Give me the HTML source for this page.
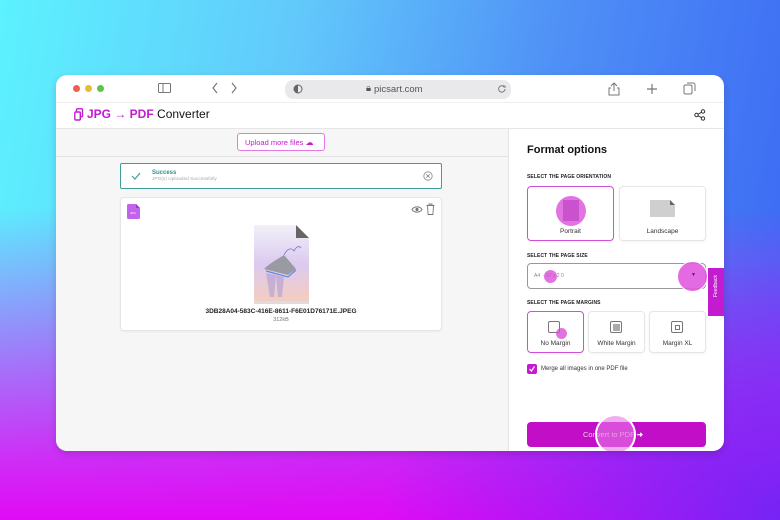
<!DOCTYPE html><html><head><meta charset="utf-8"><style>
*{margin:0;padding:0;box-sizing:border-box}
body{width:780px;height:520px;overflow:hidden;position:relative;font-family:"Liberation Sans",sans-serif;
background:
radial-gradient(ellipse 420px 260px at 800px 520px,rgba(100,40,245,.9),rgba(100,40,245,0)),
linear-gradient(to bottom,rgba(225,20,245,0) 40%,rgba(225,15,245,.85) 88%,rgba(225,10,245,1) 100%),
linear-gradient(100deg,#5cf2ff 0%,#62c8fb 35%,#4f90f6 65%,#3a66f4 100%);}
.a{position:absolute}
.win{left:56px;top:75px;width:668px;height:376px;background:#fff;border-radius:11px;overflow:hidden;box-shadow:0 3px 8px rgba(0,0,0,.15)}
.dot{width:7px;height:7px;border-radius:50%;top:10px}
.lbl{font-size:5px;font-weight:bold;color:#222;letter-spacing:.1px}
.card{border:1px solid #e6e6e6;border-radius:4px;background:#fff;box-shadow:0 1px 2px rgba(0,0,0,.05)}
.sel{border:1.5px solid #d04ed8}
.ct{font-size:6.5px;color:#333;text-align:center;width:100%}
.circ{border-radius:50%;background:rgba(215,70,215,.75)}
</style></head><body>
<div class="a win">
 <div class="a dot" style="left:17px;background:#ec5f57"></div>
 <div class="a dot" style="left:29px;background:#e6bc35"></div>
 <div class="a dot" style="left:41px;background:#5fc24a"></div>
 <svg class="a" style="left:102px;top:8px" width="14" height="11"><rect x=".5" y=".5" width="12" height="9" rx="1" fill="none" stroke="#777"/><line x1="5" y1="1" x2="5" y2="10" stroke="#777"/></svg>
 <svg class="a" style="left:155px;top:7px" width="30" height="12"><path d="M6 1 2 6 6 11M21 1 25 6 21 11" fill="none" stroke="#777" stroke-width="1.2"/></svg>
 <div class="a" style="left:229px;top:5px;width:226px;height:19px;background:#e9e9ec;border-radius:8px"></div>
 <svg class="a" style="left:237px;top:9px" width="10" height="10"><circle cx="5" cy="5" r="4" fill="none" stroke="#666"/><path d="M5 1a4 4 0 0 0 0 8z" fill="#666"/></svg>
 <div class="a" style="left:310px;top:8px;font-size:9.5px;color:#555">&#128274;&#xFE0E;</div>
 <div class="a" style="left:318px;top:9px;font-size:9.5px;color:#555">picsart.com</div>
 <svg class="a" style="left:441px;top:9px" width="10" height="10"><path d="M8 5a3.2 3.2 0 1 1-1-2.4M7 1v2h2" fill="none" stroke="#777"/></svg>
 <svg class="a" style="left:552px;top:7px" width="12" height="14"><path d="M6 9V1M3 4l3-3 3 3M3 6H1v7h10V6H9" fill="none" stroke="#777"/></svg>
 <svg class="a" style="left:590px;top:8px" width="12" height="12"><path d="M6 1v10M1 6h10" stroke="#777" stroke-width="1.2"/></svg>
 <svg class="a" style="left:627px;top:7px" width="13" height="13"><rect x="1" y="3" width="8" height="9" rx="1.5" fill="none" stroke="#777"/><path d="M4 1h6a2 2 0 0 1 2 2v6" fill="none" stroke="#777"/></svg>
 <div class="a" style="left:0;top:27px;width:668px;height:1px;background:#eee"></div>
 <svg class="a" style="left:18px;top:33px" width="10" height="13"><rect x="2.5" y=".8" width="6" height="8" rx="1" fill="none" stroke="#c21bd0" stroke-width="1.4"/><rect x=".8" y="4" width="5.5" height="8" rx="1" fill="#fff" stroke="#c21bd0" stroke-width="1.4"/></svg>
 <div class="a" style="left:31px;top:32px;font-size:12px;color:#111"><b style="color:#c21bd0;font-weight:600">JPG → PDF</b> Converter</div>
 <svg class="a" style="left:638px;top:34px" width="12" height="12"><circle cx="9" cy="2.5" r="1.7" fill="none" stroke="#333"/><circle cx="2.5" cy="6" r="1.7" fill="none" stroke="#333"/><circle cx="9" cy="9.5" r="1.7" fill="none" stroke="#333"/><path d="M4 5.2 7.5 3.3M4 6.8l3.5 1.9" stroke="#333"/></svg>
 <div class="a" style="left:0;top:53px;width:668px;height:1px;background:#e6e6e6"></div>
 <div class="a" style="left:0;top:54px;width:452px;height:322px;background:#f6f6f6"></div>
 <div class="a" style="left:0;top:81px;width:452px;height:1px;background:#e2e2e2"></div>
 <div class="a" style="left:181px;top:58px;width:88px;height:18px;border:1px solid #e178e5;border-radius:3px;background:#fff;font-size:7.5px;color:#c21bd0;padding:4px 0 0 7px">Upload more files <span style="font-size:8px">&#9729;&#xFE0E;</span></div>
 <div class="a" style="left:64px;top:88px;width:322px;height:26px;border:1.5px solid #3f9e98;border-radius:2px;background:#fff"></div>
 <svg class="a" style="left:75px;top:97px" width="10" height="8"><path d="M1 4l3 3 5-6" fill="none" stroke="#3f9e98" stroke-width="1.2"/></svg>
 <div class="a" style="left:96px;top:95px;font-size:6px;font-weight:bold;color:#2e8f88">Success</div>
 <div class="a" style="left:96px;top:102px;font-size:4.8px;color:#aaa">JPG(s) Uploaded Successfully</div>
 <svg class="a" style="left:367px;top:96px" width="10" height="10"><circle cx="5" cy="5" r="4.2" fill="none" stroke="#888" stroke-width=".8"/><path d="M3.3 3.3l3.4 3.4M6.7 3.3 3.3 6.7" stroke="#888" stroke-width=".8"/></svg>
 <div class="a card" style="left:64px;top:122px;width:322px;height:134px"></div>
 <svg class="a" style="left:71px;top:129px" width="13" height="15"><path d="M0 1.5A1.5 1.5 0 0 1 1.5 0H9l4 4v9.5A1.5 1.5 0 0 1 11.5 15h-10A1.5 1.5 0 0 1 0 13.5z" fill="#c264ea"/><path d="M9 0v4h4" fill="#9a3cc8"/><text x="3" y="10" font-size="3" fill="#fff" font-family="Liberation Sans">JPG</text></svg>
 <svg class="a" style="left:355px;top:130px" width="12" height="9"><path d="M1 4.5C3 1 9 1 11 4.5 9 8 3 8 1 4.5z" fill="none" stroke="#777"/><circle cx="6" cy="4.5" r="1.6" fill="#777"/></svg>
 <svg class="a" style="left:370px;top:128px" width="9" height="12"><path d="M.5 2.5h8M3 2.5V1h3v1.5M1.5 2.5l.6 9h4.8l.6-9" fill="none" stroke="#777" stroke-width=".9"/></svg>
 <svg class="a" style="left:198px;top:150px" width="56" height="80"><defs><linearGradient id="g" x1="0" y1="0" x2="0" y2="1"><stop offset="0" stop-color="#f2f0f7"/><stop offset=".5" stop-color="#dccaf0"/><stop offset="1" stop-color="#f4cdbf"/></linearGradient></defs><path d="M0 0h42l13 13v64H0z" fill="url(#g)"/><path d="M42 0l13 13H42z" fill="#666"/><path d="M10 44c6-6 14-10 20-14l12 14-8 6z" fill="#9a9aa2"/><path d="M12 46l22 6 8-7" fill="none" stroke="#5a8ee8" stroke-width="1.2"/><path d="M12 48l4 24h4l2-22zM22 50l2 22h4l2-20z" fill="#a79ad4" opacity=".55"/><path d="M30 30c3-6 7-8 10-4 2-4 5-6 7-3" fill="none" stroke="#6a7ed0" stroke-width=".8"/><rect x="0" y="76" width="55" height="3" fill="#ddd"/></svg>
 <div class="a" style="left:64px;top:233px;width:322px;text-align:center;font-size:6.5px;font-weight:bold;color:#222">3DB28A04-583C-416E-8611-F6E01D76171E.JPEG</div>
 <div class="a" style="left:64px;top:242px;width:322px;text-align:center;font-size:5.5px;color:#777">312kB</div>
 <div class="a" style="left:452px;top:54px;width:1px;height:322px;background:#e4e4e4"></div>
 <div class="a" style="left:471px;top:69px;font-size:11px;font-weight:bold;color:#111">Format options</div>
 <div class="a lbl" style="left:471px;top:99px">SELECT THE PAGE ORIENTATION</div>
 <div class="a card sel" style="left:471px;top:111px;width:87px;height:55px"></div>
 <div class="a circ" style="left:500px;top:121px;width:30px;height:30px"></div>
 <div class="a" style="left:507px;top:125px;width:16px;height:21px;background:#c245c8;opacity:.7"></div>
 <div class="a ct" style="left:471px;top:153px;width:87px">Portrait</div>
 <div class="a card" style="left:563px;top:111px;width:87px;height:55px"></div>
 <svg class="a" style="left:594px;top:125px" width="25" height="17"><path d="M0 0h20l5 5v12H0z" fill="#cfcfcf"/><path d="M20 0l5 5h-5z" fill="#666"/></svg>
 <div class="a ct" style="left:563px;top:153px;width:87px">Landscape</div>
 <div class="a lbl" style="left:471px;top:178px">SELECT THE PAGE SIZE</div>
 <div class="a" style="left:471px;top:188px;width:179px;height:26px;border:1px solid #999;border-radius:4px"></div>
 <div class="a" style="left:478px;top:198px;font-size:5px;color:#888">A4 &nbsp;· 97 x 2 0</div>
 <div class="a circ" style="left:488px;top:195px;width:13px;height:13px"></div>
 <div class="a circ" style="left:621px;top:186px;width:31px;height:31px;border:1.5px solid #fff;background:rgba(225,90,225,.9)"></div>
 <div class="a" style="left:635px;top:197px;font-size:5px;color:#333">▼</div>
 <div class="a" style="left:652px;top:193px;width:16px;height:48px;background:#c21bd0"></div>
 <div class="a" style="left:657px;top:222px;font-size:5px;color:#fff;transform:rotate(-90deg);transform-origin:0 0;white-space:nowrap">Feedback</div>
 <div class="a lbl" style="left:471px;top:225px">SELECT THE PAGE MARGINS</div>
 <div class="a card sel" style="left:471px;top:236px;width:57px;height:42px"></div>
 <div class="a" style="left:492px;top:246px;width:12px;height:12px;border:1.2px solid #777;border-radius:2px"></div>
 <div class="a circ" style="left:500px;top:253px;width:11px;height:11px"></div>
 <div class="a ct" style="left:471px;top:265px;width:57px">No Margin</div>
 <div class="a card" style="left:532px;top:236px;width:57px;height:42px"></div>
 <div class="a" style="left:554px;top:246px;width:12px;height:12px;border:1.2px solid #777;border-radius:2px;padding:1.5px"><div style="width:100%;height:100%;background:#aaa"></div></div>
 <div class="a ct" style="left:532px;top:265px;width:57px">White Margin</div>
 <div class="a card" style="left:593px;top:236px;width:57px;height:42px"></div>
 <div class="a" style="left:615px;top:246px;width:12px;height:12px;border:1.2px solid #777;border-radius:2px;padding:2.5px"><div style="width:100%;height:100%;border:1px solid #777"></div></div>
 <div class="a ct" style="left:593px;top:265px;width:57px">Margin XL</div>
 <div class="a" style="left:471px;top:289px;width:10px;height:10px;background:#c21bd0;border-radius:2px"></div>
 <svg class="a" style="left:472px;top:290px" width="8" height="8"><path d="M1.5 4l2 2 3-4.5" fill="none" stroke="#fff" stroke-width="1.2"/></svg>
 <div class="a" style="left:485px;top:291px;font-size:6px;color:#333">Merge all images in one PDF file</div>
 <div class="a" style="left:471px;top:347px;width:179px;height:25px;background:#c30ec8;border-radius:4px"></div>
 <div class="a" style="left:527px;top:355px;font-size:7.5px;color:#f0c8f2">Convert to PDF <b style="color:#fff">➜</b></div>
 <div class="a circ" style="left:539px;top:339px;width:41px;height:41px;border:2px solid #fff;background:rgba(230,120,230,.6)"></div>
</div>
</body></html>
